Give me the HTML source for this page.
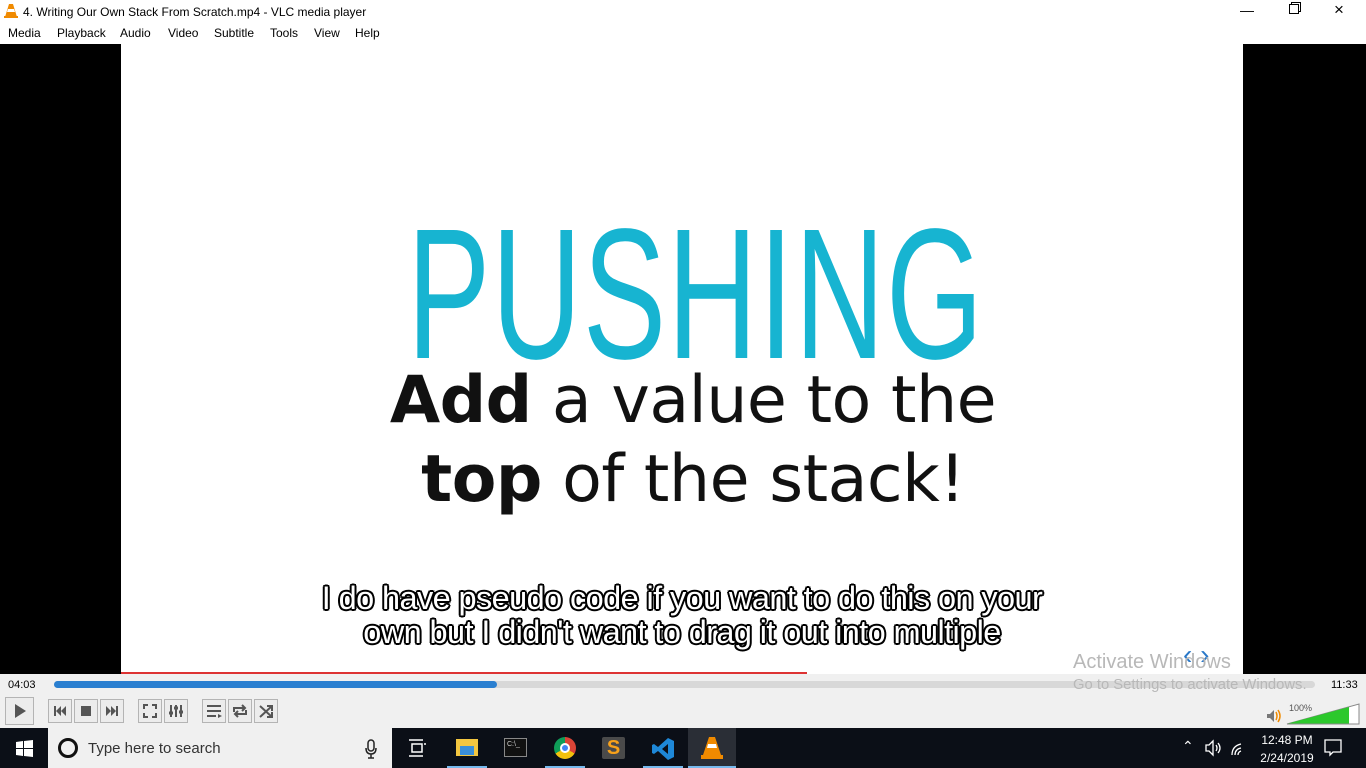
<!DOCTYPE html>
<html><head><meta charset="utf-8"><style>
*{margin:0;padding:0;box-sizing:border-box}
body{width:1366px;height:768px;overflow:hidden;background:#fff;font-family:"Liberation Sans",sans-serif;position:relative}
.a{position:absolute}
.menu span{position:absolute;top:26px;font-size:12px;color:#000}
.btn{position:absolute;top:699px;width:24px;height:24px;border:1px solid #b4b4b4;background:#ececec}
.sub{position:absolute;left:121px;width:1122px;text-align:center;font-size:32.5px;color:#fff;letter-spacing:-0.6px;
text-shadow:-1.5px -1.5px 0 #000,1.5px -1.5px 0 #000,-1.5px 1.5px 0 #000,1.5px 1.5px 0 #000,0 2px 0 #000,2px 0 0 #000,-2px 0 0 #000,0 -2px 0 #000}
.tb{position:absolute;top:728px;height:40px}
</style></head><body>
<svg class="a" style="left:3px;top:3px" width="16" height="16" viewBox="0 0 16 16"><path d="M6 1h4l4 13H2z" fill="#f08a00"/><path d="M5 6h6l1 3H4z" fill="#fff"/><rect x="1" y="13" width="14" height="2" fill="#f08a00"/></svg>
<div class="a" style="left:23px;top:5px;font-size:12px">4. Writing Our Own Stack From Scratch.mp4 - VLC media player</div>
<div class="a" style="left:1240px;top:2px;font-size:14px">&#8212;</div>
<div class="a" style="left:1289px;top:4px;width:10px;height:10px;border:1px solid #000;box-shadow:2px -2px 0 -1px #fff,2px -2px 0 0 #000"></div>
<div class="a" style="left:1334px;top:0px;font-size:17px">&#215;</div>
<div class="menu"><span style="left:8px">Media</span><span style="left:57px">Playback</span><span style="left:120px">Audio</span><span style="left:168px">Video</span><span style="left:214px">Subtitle</span><span style="left:270px">Tools</span><span style="left:314px">View</span><span style="left:355px">Help</span></div>
<div class="a" style="left:0;top:44px;width:1366px;height:630px;background:#000"></div>
<div class="a" style="left:121px;top:44px;width:1122px;height:630px;background:#fff;overflow:hidden">
 <div class="a" style="left:14px;top:158px;width:1122px;text-align:center">
  <span style="display:inline-block;font-size:186px;line-height:186px;color:#17b4d1;transform:scaleX(0.67);letter-spacing:2px">PUSHING</span></div>
 <div class="a" style="left:0;top:317px;width:1122px;text-align:center;font-family:'DejaVu Sans',sans-serif;font-size:65px;line-height:79px;color:#111;padding-left:22px;letter-spacing:-0.5px">
  <b>Add</b> a value to the<br><b>top</b> of the stack!</div>
 <div class="a" style="left:0;top:628px;width:686px;height:2px;background:#d33"></div>
 <div class="a" style="left:1062px;top:595px;font-size:28px;color:#2a78c8">&#8249; &#8250;</div>
</div>
<div class="sub" style="top:580px">I do have pseudo code if you want to do this on your</div>
<div class="sub" style="top:614px">own but I didn't want to drag it out into multiple</div>
<div class="a" style="left:0;top:674px;width:1366px;height:54px;background:#f0f0f0"></div>
<div class="a" style="left:8px;top:679px;font-size:11px">04:03</div>
<div class="a" style="left:54px;top:681px;width:1261px;height:7px;border-radius:4px;background:#d8d8d8"></div>
<div class="a" style="left:54px;top:681px;width:443px;height:7px;border-radius:4px;background:#2a7fd0"></div>
<div class="a" style="left:1331px;top:679px;font-size:11px">11:33</div>
<div class="a" style="left:1073px;top:651px;font-size:20px;color:#b8b8b8">Activate Windows</div>
<div class="a" style="left:1073px;top:677px;font-size:14.8px;color:#b8b8b8">Go to Settings to activate Windows.</div>
<div class="btn" style="left:5px;top:697px;width:29px;height:28px"><svg width="27" height="26"><path d="M9 6l11 7-11 7z" fill="#555"/></svg></div>
<div class="btn" style="left:48px"><svg width="22" height="22"><path d="M5 6h2v10H5zM12 6v10l-5-5zM17 6v10l-5-5z" fill="#555"/></svg></div>
<div class="btn" style="left:74px"><svg width="22" height="22"><rect x="6" y="6" width="10" height="10" fill="#555"/></svg></div>
<div class="btn" style="left:100px"><svg width="22" height="22"><path d="M5 6v10l5-5zM10 6v10l5-5zM15 6h2v10h-2z" fill="#555"/></svg></div>
<div class="btn" style="left:138px"><svg width="22" height="22" fill="none" stroke="#555" stroke-width="2"><path d="M5 9V5h4M13 5h4v4M17 13v4h-4M9 17H5v-4"/></svg></div>
<div class="btn" style="left:164px"><svg width="22" height="22" stroke="#555" stroke-width="2"><path d="M6 5v12M11 5v12M16 5v12"/><path d="M4 13h4M9 8h4M14 12h4" stroke-width="3"/></svg></div>
<div class="btn" style="left:202px"><svg width="22" height="22" stroke="#555" stroke-width="2"><path d="M4 6h14M4 11h14M4 16h9"/><path d="M15 14l4 2-4 2z" fill="#555" stroke="none"/></svg></div>
<div class="btn" style="left:228px"><svg width="22" height="22" fill="none" stroke="#555" stroke-width="2"><path d="M5 12V8h11M13 5l3 3-3 3M17 10v4H6M9 17l-3-3 3-3"/></svg></div>
<div class="btn" style="left:254px"><svg width="22" height="22" fill="none" stroke="#555" stroke-width="2"><path d="M5 6l12 11M17 6L5 17M12 6h5v5M12 17h5v-5"/></svg></div>
<div class="a" style="left:1289px;top:703px;font-size:9px;color:#555">100%</div>
<svg class="a" style="left:1265px;top:703px" width="96" height="22"><path d="M2 11h3l4-4v12l-4-4H2z" fill="#777"/><path d="M11 9q2 4 0 8M13 7q4 6 0 12" stroke="#f08a00" fill="none" stroke-width="1.5"/><path d="M22 21L94 1v20z" fill="#fff" stroke="#888"/><path d="M23 20.5L84 4v16.5z" fill="#2cc82c"/></svg>
<div class="a" style="left:0;top:728px;width:1366px;height:40px;background:#0b0f17"></div>
<svg class="a" style="left:16px;top:740px" width="17" height="17" fill="#fff"><path d="M0 2l7-1v7H0zM8 1l9-1v8H8zM0 9h7v7l-7-1zM8 9h9v8l-9-1z"/></svg>
<div class="a" style="left:48px;top:728px;width:344px;height:40px;background:#f0f0f0"></div>
<div class="a" style="left:58px;top:738px;width:20px;height:20px;border:3px solid #111;border-radius:50%"></div>
<div class="a" style="left:88px;top:740px;font-size:15px;color:#333">Type here to search</div>
<svg class="a" style="left:364px;top:739px" width="14" height="20" fill="none" stroke="#222" stroke-width="1.5"><rect x="4" y="1" width="6" height="11" rx="3"/><path d="M2 9q0 6 5 6t5-6M7 15v4M4 19h6"/></svg>
<svg class="a" style="left:407px;top:739px" width="20" height="18" fill="none" stroke="#fff" stroke-width="1.5"><path d="M2 1h14M5 5h10v8H5zM2 17h14M18 4v2"/></svg>
<div class="tb" style="left:447px;width:40px;border-bottom:2px solid #76b9ed"></div>
<div class="a" style="left:456px;top:739px;width:22px;height:17px;background:#f3c640"></div><div class="a" style="left:460px;top:746px;width:14px;height:9px;background:#3a8fd9"></div>
<div class="a" style="left:504px;top:738px;width:23px;height:19px;background:#111;border:1px solid #888;color:#ccc;font-size:7px;padding:2px">C:\_</div>
<div class="tb" style="left:545px;width:40px;border-bottom:2px solid #76b9ed"></div>
<div class="a" style="left:554px;top:737px;width:22px;height:22px;border-radius:50%;background:conic-gradient(#db4437 0 120deg,#f4c20d 120deg 240deg,#0f9d58 240deg)"></div>
<div class="a" style="left:560px;top:743px;width:10px;height:10px;border-radius:50%;background:#4285f4;border:2px solid #fff"></div>
<div class="a" style="left:602px;top:737px;width:23px;height:22px;background:#4a4a4a;border-radius:2px;color:#f8a11a;font-weight:bold;font-size:20px;text-align:center;line-height:22px">S</div>
<div class="tb" style="left:643px;width:40px;border-bottom:2px solid #76b9ed"></div>
<svg class="a" style="left:651px;top:737px" width="24" height="24"><path d="M17 1l6 3v16l-6 3-10-9-4 3-2-1V8l2-1 4 3zM17 7l-6 5 6 5z" fill="#1e88d8"/></svg>
<div class="tb" style="left:688px;width:48px;background:#2a2e36;border-bottom:2px solid #76b9ed"></div>
<svg class="a" style="left:700px;top:736px" width="24" height="24"><path d="M9 1h6l6 18H3z" fill="#f08a00"/><path d="M8 8h8l1 4H7z" fill="#fff"/><rect x="1" y="19" width="22" height="4" fill="#f08a00"/></svg>
<div class="a" style="left:1182px;top:738px;color:#fff;font-size:14px">&#8963;</div>
<svg class="a" style="left:1204px;top:739px" width="20" height="18" fill="none" stroke="#fff" stroke-width="1.3"><path d="M2 6h3l4-4v14l-4-4H2zM12 6q2 3 0 6M14 4q4 5 0 10"/></svg>
<svg class="a" style="left:1230px;top:739px" width="18" height="18" fill="none" stroke="#fff" stroke-width="1.3"><path d="M2 16q0-9 9-11M5 16q0-6 6-7M8 16q0-3 3-4"/></svg>
<div class="a" style="left:1254px;top:731px;width:66px;text-align:center;color:#fff;font-size:12px;line-height:18px">12:48 PM<br>2/24/2019</div>
<svg class="a" style="left:1324px;top:739px" width="18" height="18" fill="none" stroke="#fff" stroke-width="1.3"><path d="M1 1h16v12H9l-3 3v-3H1z"/></svg>
</body></html>
